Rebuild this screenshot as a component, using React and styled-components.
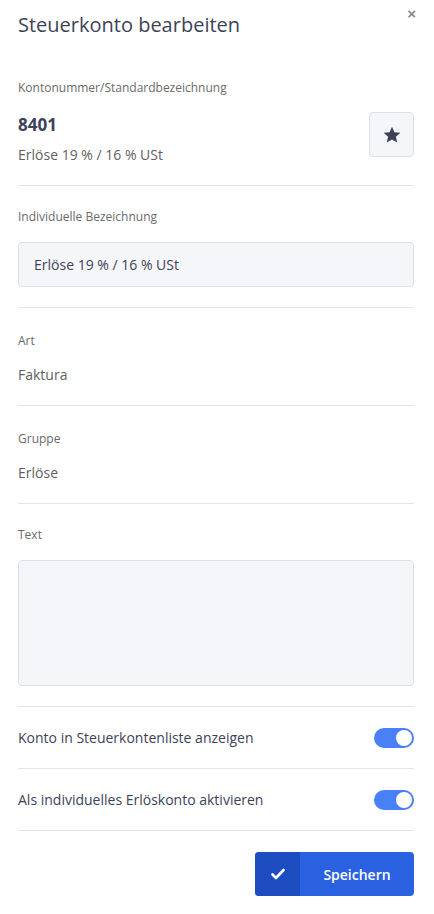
import React, { useState } from 'react';
import styled, { createGlobalStyle } from 'styled-components';

const GlobalStyle = createGlobalStyle`
  html, body {
    margin: 0;
    padding: 0;
    background: #fff;
  }
  body {
    font-family: "Open Sans", "Noto Sans", sans-serif;
    -webkit-font-smoothing: antialiased;
  }
`;

const Panel = styled.div`
  width: 434px;
  box-sizing: border-box;
  padding: 0 20px 0 18px;
  position: relative;
`;

const Header = styled.div`
  display: flex;
  align-items: flex-start;
  justify-content: space-between;
  box-sizing: border-box;
  padding-top: 11px;
  height: 67px;
`;

const Title = styled.h1`
  margin: 0;
  font-size: 20px;
  font-weight: 400;
  color: #3c4358;
  line-height: 28px;
`;

const Close = styled.button`
  position: absolute;
  top: 6px;
  right: 18px;
  border: 0;
  background: none;
  padding: 0;
  font-size: 15px;
  font-weight: 700;
  color: #8a8a8a;
  cursor: pointer;
  line-height: 1;
`;

const Section = styled.div`
  padding: ${p => p.$pad || '14px 0 20px'};
  border-bottom: 1px solid #e2e3ea;
`;

const Label = styled.div`
  font-size: 12px;
  color: #6a6a6a;
  line-height: 16px;
  margin-bottom: ${p => p.$gap || '17px'};
`;

const Value = styled.div`
  font-size: 14px;
  color: #5f5f5f;
  line-height: 18px;
`;

const KontoRow = styled.div`
  display: flex;
  justify-content: space-between;
  align-items: flex-start;
`;

const Number = styled.div`
  font-size: 17px;
  font-weight: 700;
  color: #3c4358;
  line-height: 22px;
  margin: 2px 0 10px;
`;

const StarButton = styled.button`
  width: 45px;
  height: 45px;
  border: 1px solid #dfe1ea;
  border-radius: 4px;
  background: #f5f6fa;
  display: flex;
  align-items: center;
  justify-content: center;
  padding: 0;
  cursor: pointer;
`;

const Input = styled.input`
  display: block;
  width: 100%;
  box-sizing: border-box;
  height: 45px;
  border: 1px solid #dfe1ea;
  border-radius: 4px;
  background: #f5f6fa;
  padding: 0 15px;
  font-family: inherit;
  font-size: 14px;
  color: #3c4358;
  outline: none;
`;

const TextArea = styled.textarea`
  display: block;
  width: 100%;
  box-sizing: border-box;
  height: 126px;
  border: 1px solid #dfe1ea;
  border-radius: 4px;
  background: #f5f6fa;
  resize: none;
  font-family: inherit;
  font-size: 14px;
  outline: none;
`;

const ToggleRow = styled.div`
  display: flex;
  align-items: center;
  justify-content: space-between;
  height: 61px;
  border-bottom: 1px solid #e2e3ea;
  font-size: 14px;
  color: #3c4358;
`;

const Toggle = styled.button`
  width: 40px;
  height: 20px;
  border-radius: 10px;
  border: 0;
  padding: 0;
  background: ${p => (p.$on ? '#4a80f5' : '#c9ccd6')};
  position: relative;
  cursor: pointer;
  &::after {
    content: '';
    position: absolute;
    top: 2px;
    left: ${p => (p.$on ? '22px' : '2px')};
    width: 16px;
    height: 16px;
    border-radius: 50%;
    background: #fff;
  }
`;

const Footer = styled.div`
  display: flex;
  justify-content: flex-end;
  padding: 21px 0 16px;
`;

const SaveButton = styled.button`
  display: flex;
  width: 159px;
  height: 44px;
  border: 0;
  padding: 0;
  border-radius: 4px;
  overflow: hidden;
  background: #2a61e0;
  cursor: pointer;
  font-family: inherit;
`;

const SaveIcon = styled.span`
  width: 45px;
  display: flex;
  align-items: center;
  justify-content: center;
  background: #1c4cc0;
`;

const SaveText = styled.span`
  flex: 1;
  display: flex;
  align-items: center;
  justify-content: center;
  color: #fff;
  font-size: 14px;
  font-weight: 600;
`;

export default function App() {
  const [showList, setShowList] = useState(true);
  const [revenue, setRevenue] = useState(true);

  return (
    <Panel>
      <GlobalStyle />
      <Header>
        <Title>Steuerkonto bearbeiten</Title>
      </Header>
      <Close aria-label="Schließen">×</Close>

      <Section $pad="13px 0 21px">
        <Label $gap="16px">Kontonummer/Standardbezeichnung</Label>
        <KontoRow>
          <div>
            <Number>8401</Number>
            <Value>Erlöse 19 % / 16 % USt</Value>
          </div>
          <StarButton aria-label="Favorit">
            <svg width="20" height="20" viewBox="0 0 24 24">
              <path
                fill="#3c4358"
                d="M12 2.2l2.95 6.5 7.05.7-5.3 4.75 1.55 6.95L12 17.5l-6.25 3.6 1.55-6.95L2 9.4l7.05-.7z"
              />
            </svg>
          </StarButton>
        </KontoRow>
      </Section>

      <Section $pad="23px 0 20px">
        <Label>Individuelle Bezeichnung</Label>
        <Input defaultValue="Erlöse 19 % / 16 % USt" />
      </Section>

      <Section $pad="25px 0 21px">
        <Label $gap="17px">Art</Label>
        <Value>Faktura</Value>
      </Section>

      <Section $pad="25px 0 21px">
        <Label $gap="17px">Gruppe</Label>
        <Value>Erlöse</Value>
      </Section>

      <Section $pad="23px 0 20px">
        <Label>Text</Label>
        <TextArea />
      </Section>

      <ToggleRow>
        <span>Konto in Steuerkontenliste anzeigen</span>
        <Toggle $on={showList} onClick={() => setShowList(v => !v)} />
      </ToggleRow>
      <ToggleRow>
        <span>Als individuelles Erlöskonto aktivieren</span>
        <Toggle $on={revenue} onClick={() => setRevenue(v => !v)} />
      </ToggleRow>

      <Footer>
        <SaveButton>
          <SaveIcon>
            <svg width="14" height="12" viewBox="0 0 14 12">
              <path
                d="M1.5 6.5l3.5 3.5 7.5-8"
                fill="none"
                stroke="#fff"
                strokeWidth="2.6"
                strokeLinecap="round"
                strokeLinejoin="round"
              />
            </svg>
          </SaveIcon>
          <SaveText>Speichern</SaveText>
        </SaveButton>
      </Footer>
    </Panel>
  );
}
